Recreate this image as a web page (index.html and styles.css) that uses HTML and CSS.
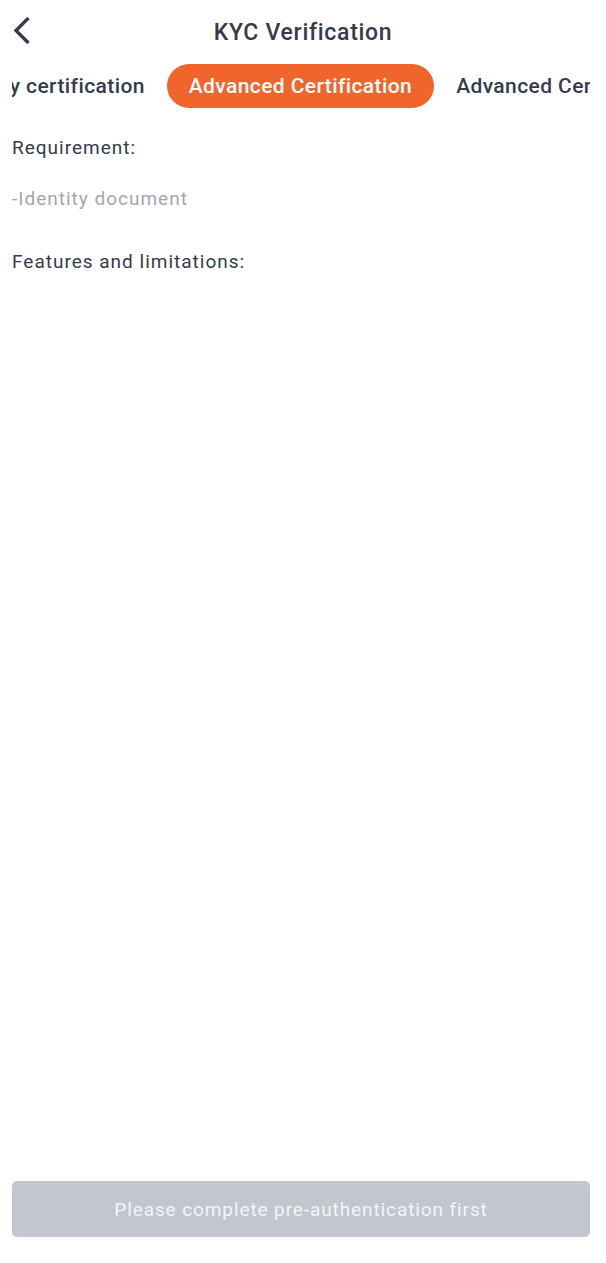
FILE: index.html
```html
<!DOCTYPE html>
<html lang="en">
<head>
<meta charset="utf-8">
<title>KYC Verification</title>
<link rel="stylesheet" href="styles.css">
</head>
<body>
<div class="page">
  <header class="nav">
    <button class="back" aria-label="Back">
      <svg width="22" height="32" viewBox="0 0 22 32"><path d="M17.5 3 L5 15.5 L17.5 28" fill="none" stroke="#343b4c" stroke-width="3.4" stroke-linecap="butt" stroke-linejoin="miter"/></svg>
    </button>
    <h1 class="title">KYC Verification</h1>
  </header>
  <nav class="tabs">
    <div class="tab-row">
      <span class="tab">Primary certification</span>
      <span class="tab active">Advanced Certification</span>
      <span class="tab">Advanced Certification</span>
    </div>
  </nav>
  <main class="content">
    <p class="label">Requirement:</p>
    <p class="item">-Identity document</p>
    <p class="label features">Features and limitations:</p>
  </main>
  <footer class="footer">
    <button class="submit" disabled>Please complete pre-authentication first</button>
  </footer>
</div>
</body>
</html>
```
FILE: styles.css
```css
html, body {
  margin: 0;
  padding: 0;
  background: #ffffff;
}
body {
  font-family: Roboto, "Liberation Sans", sans-serif;
  color: #343b4c;
}
.page {
  width: 606px;
  height: 1263px;
  display: flex;
  flex-direction: column;
}
.nav {
  height: 64px;
  display: flex;
  align-items: center;
  justify-content: center;
  position: relative;
}
.back {
  position: absolute;
  left: 11px;
  top: 15px;
  border: 0;
  background: none;
  padding: 0;
  width: 22px;
  height: 32px;
}
.back svg { display: block; }
.title {
  margin: 0;
  font-size: 23px;
  font-weight: 500;
  letter-spacing: 0.7px;
  color: #343b4c;
}
.tabs {
  margin: 0 16px 0 12px;
  overflow: hidden;
  height: 44px;
}
.tab-row {
  display: flex;
  white-space: nowrap;
  margin-left: -90px;
}
.tab {
  flex: none;
  height: 44px;
  line-height: 44px;
  padding: 0 22px;
  font-size: 21px;
  font-weight: 500;
  letter-spacing: 0.4px;
  color: #343b4c;
  border-radius: 22px;
}
.tab.active {
  background: #f0652b;
  color: #ffffff;
}
.content {
  flex: 1;
  padding: 26px 12px 0;
}
.label {
  margin: 0;
  font-size: 19px;
  line-height: 28px;
  letter-spacing: 1px;
  color: #343b4c;
}
.item {
  margin: 23px 0 0;
  font-size: 19px;
  line-height: 28px;
  letter-spacing: 1px;
  color: #a2a6b2;
}
.features {
  margin-top: 35px;
}
.footer {
  padding: 0 16px 26px 12px;
}
.submit {
  width: 100%;
  height: 56px;
  border: 0;
  border-radius: 5px;
  background: #c3c6ce;
  color: #f4f5f7;
  font-family: Roboto, "Liberation Sans", sans-serif;
  font-size: 19px;
  font-weight: 400;
  letter-spacing: 0.9px;
}
```
